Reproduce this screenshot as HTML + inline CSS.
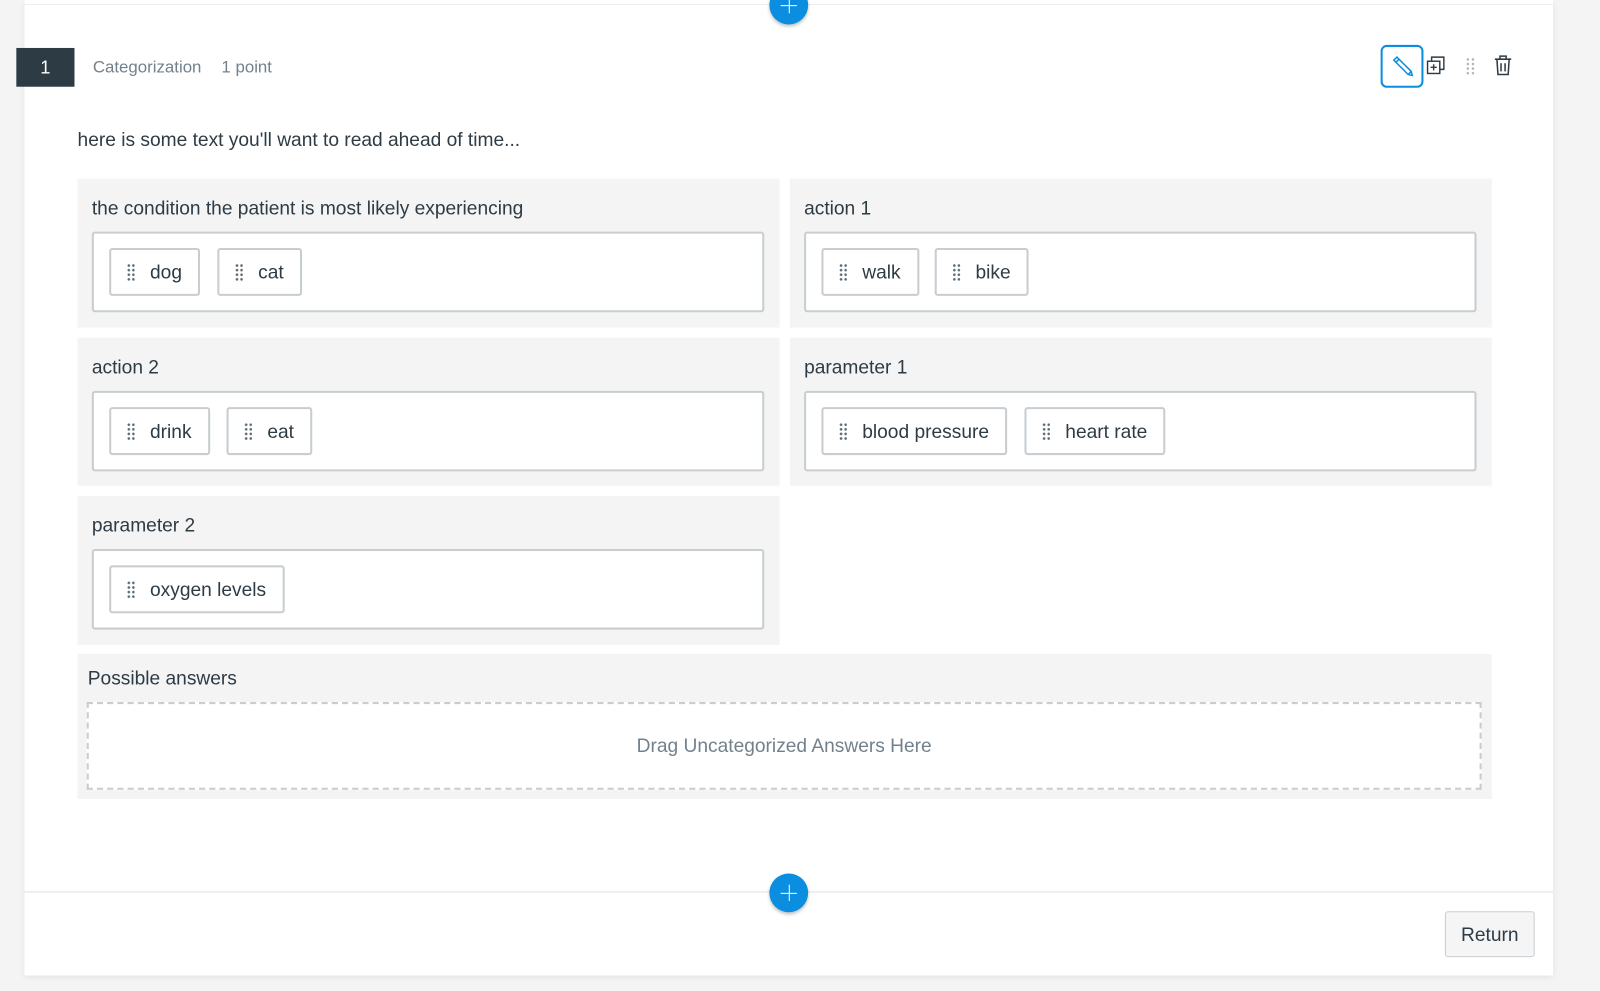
<!DOCTYPE html>
<html><head><style>
*{box-sizing:border-box;margin:0;padding:0}
body{width:1600px;height:991px;background:#f4f4f4;font-family:"Liberation Sans",sans-serif;position:relative;overflow:hidden;color:#2d3b45}
#w{position:absolute;left:0;top:0;width:1568px;height:971px;transform:scale(1.0204);transform-origin:0 0}
.card{position:absolute;left:24px;top:0;width:1498px;height:956px;background:#fff;box-shadow:0 2px 6px rgba(0,0,0,.08)}
.a{position:absolute}
.num{left:16px;top:47px;width:57px;height:38px;background:#2d3b45;color:#fff;font-size:18px;text-align:center;line-height:38px}
.meta{color:#73818c;font-size:16.5px}
.cat{position:absolute;background:#f4f4f4;width:688px;height:146px}
.cat .t{position:absolute;left:14px;top:18px;font-size:18.8px;color:#2d3b45}
.cat .z{position:absolute;left:14px;top:52px;width:659px;height:79px;background:#fff;border:2px solid #c7cdd1;border-radius:3px}
.chip{position:absolute;top:14px;height:47px;border:2px solid #c7cdd1;border-radius:3px;background:#fff;font-size:18.8px;line-height:43px;padding-left:38px;padding-right:16px;color:#2d3b45}
.chip:before{content:"";position:absolute;left:15px;top:13px;width:8px;height:18px;background-image:radial-gradient(circle,#5d6b75 1.1px,transparent 1.5px);background-size:4.5px 4.5px}
.plus{position:absolute;left:754px;width:38px;height:38px;border-radius:50%;background:#0b8ee0;box-shadow:0 2px 3px rgba(0,0,0,.25)}
.plus:before,.plus:after{content:"";position:absolute;background:#fff;left:18.5px;top:11px;width:1px;height:16px}
.plus:after{left:11px;top:18.5px;width:16px;height:1px}
</style></head><body><div id="w">
<div class="card"></div>
<div class="a" style="left:24px;top:4px;width:1498px;height:1px;background:#eceeef"></div>
<div class="plus" style="top:-14px"></div>
<div class="a num">1</div>
<div class="a meta" style="left:91px;top:57px">Categorization</div>
<div class="a meta" style="left:217px;top:57px">1 point</div>
<div class="a" style="left:1353px;top:44px;width:42px;height:42px;border:2px solid #0b8ee0;border-radius:6px"></div>
<svg class="a" style="left:1362px;top:53px" width="24" height="24" viewBox="0 0 24 24" fill="none" stroke="#0b8ee0" stroke-width="1.5"><path d="M4 6 L7 3 L21 17 L22 21 L18 20 Z M6 8 L9 5 M18 20 L21 17"/></svg>
<svg class="a" style="left:1396px;top:53px" width="22" height="22" viewBox="0 0 22 22" fill="none" stroke="#2d3b45" stroke-width="1.4"><rect x="3" y="7" width="12" height="12"/><path d="M7 7V3h12v12h-4M9 10v6M6 13h6"/></svg>
<div class="a" style="left:1436px;top:56px;width:10px;height:18px;background-image:radial-gradient(circle,#a8b0b6 1px,transparent 1.4px);background-size:5px 4.5px"></div>
<svg class="a" style="left:1463px;top:53px" width="20" height="22" viewBox="0 0 20 22" fill="none" stroke="#2d3b45" stroke-width="1.5"><path d="M2 5h16M7 5V2h6v3M4 5l1 15h10l1-15M8 9v8M12 9v8"/></svg>
<div class="a" style="left:76px;top:126px;font-size:18.8px;color:#2d3b45">here is some text you'll want to read ahead of time...</div>

<div class="cat" style="left:76px;top:175px"><div class="t">the condition the patient is most likely experiencing</div><div class="z"><div class="chip" style="left:15px">dog</div><div class="chip" style="left:121px">cat</div></div></div>
<div class="cat" style="left:774px;top:175px"><div class="t">action 1</div><div class="z"><div class="chip" style="left:15px">walk</div><div class="chip" style="left:126px">bike</div></div></div>
<div class="cat" style="left:76px;top:331px;height:145px"><div class="t">action 2</div><div class="z"><div class="chip" style="left:15px">drink</div><div class="chip" style="left:130px">eat</div></div></div>
<div class="cat" style="left:774px;top:331px;height:145px"><div class="t">parameter 1</div><div class="z"><div class="chip" style="left:15px">blood pressure</div><div class="chip" style="left:214px">heart rate</div></div></div>
<div class="cat" style="left:76px;top:486px;height:146px"><div class="t">parameter 2</div><div class="z"><div class="chip" style="left:15px">oxygen levels</div></div></div>

<div class="a" style="left:76px;top:641px;width:1386px;height:142px;background:#f4f4f4">
<div class="a" style="left:10px;top:13px;font-size:18.8px;color:#2d3b45">Possible answers</div>
<div class="a" style="left:9px;top:47px;width:1367px;height:86px;border:2px dashed #c7cdd1;background:#fff;text-align:center;line-height:82px;font-size:18.8px;color:#73818c">Drag Uncategorized Answers Here</div>
</div>

<div class="a" style="left:24px;top:873px;width:1498px;height:2px;background:#eceeef"></div>
<div class="plus" style="top:856px"></div>
<div class="a" style="left:1416px;top:893px;width:88px;height:45px;border:1px solid #c7cdd1;border-radius:3px;background:#f5f5f5;font-size:18.8px;line-height:43px;text-align:center;color:#2d3b45">Return</div>
</div></body></html>
